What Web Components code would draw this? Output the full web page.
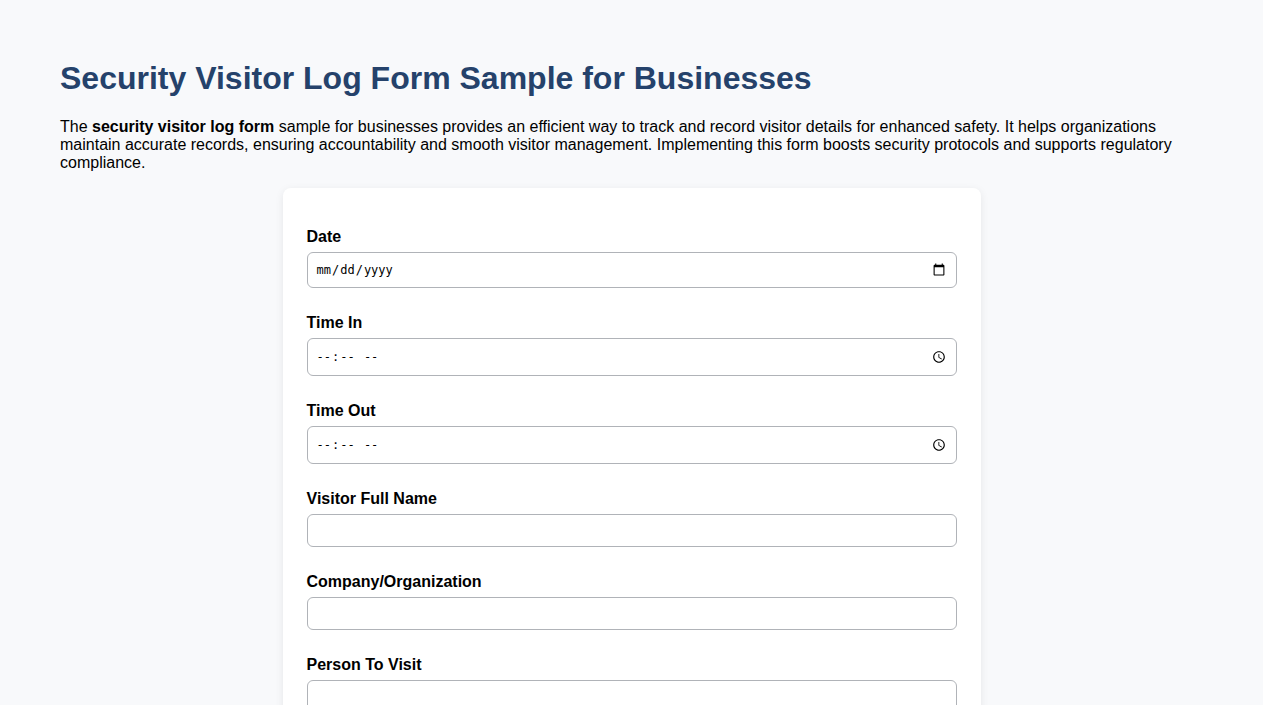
<!DOCTYPE html>
<html lang="en">
<head>
<meta charset="utf-8">
<meta name="viewport" content="width=device-width, initial-scale=1">
<title>Security Visitor Log Form Sample for Businesses</title>
<style>
  html { scrollbar-width: none; }
  body { margin: 0; background: #f8f9fb; color: #000; font: 16px/18px "Liberation Sans", Arial, sans-serif; }
</style>
</head>
<body>
<visitor-page>
  <span slot="title">Security Visitor Log Form Sample for Businesses</span>
  <span slot="intro">The <b>security visitor log form</b> sample for businesses provides an efficient way to track and record visitor details for enhanced safety. It helps organizations maintain accurate records, ensuring accountability and smooth visitor management. Implementing this form boosts security protocols and supports regulatory compliance.</span>
  <visitor-form>
    <form-field type="date" name="date" label="Date"></form-field>
    <form-field type="time" name="time-in" label="Time In"></form-field>
    <form-field type="time" name="time-out" label="Time Out"></form-field>
    <form-field type="text" name="visitor" label="Visitor Full Name"></form-field>
    <form-field type="text" name="company" label="Company/Organization"></form-field>
    <form-field type="text" name="host" label="Person To Visit"></form-field>
  </visitor-form>
</visitor-page>
<script>
class VisitorPage extends HTMLElement {
  constructor() {
    super();
    this.attachShadow({ mode: "open" }).innerHTML = `
      <style>
        :host { display: block; padding: 60px; }
        h1 { margin: 0 0 22px; color: #25426b; font-size: 32px; line-height: 36px; }
        p { margin: 0 0 16px; }
      </style>
      <h1><slot name="title"></slot></h1>
      <p><slot name="intro"></slot></p>
      <slot></slot>`;
  }
}
class VisitorForm extends HTMLElement {
  constructor() {
    super();
    this.attachShadow({ mode: "open" }).innerHTML = `
      <style>
        :host { display: block; }
        form { box-sizing: border-box; max-width: 698px; margin: 0 auto; padding: 40px 24px 24px; background: #fff; border-radius: 8px; box-shadow: 0 2px 8px rgba(0,0,0,.08); }
      </style>
      <form><slot></slot></form>`;
  }
}
class FormField extends HTMLElement {
  connectedCallback() {
    const type = this.getAttribute("type");
    const name = this.getAttribute("name");
    this.attachShadow({ mode: "open" }).innerHTML = `
      <style>
        :host { display: block; margin-bottom: 26px; }
        label { display: block; margin-bottom: 6px; font-weight: bold; }
        input { display: block; box-sizing: border-box; width: 100%; height: 33px; margin: 0; padding: 8px; border: 1px solid #b0b3b8; border-radius: 6px; background: #fff; color: #000; font: 13px/15px "Liberation Sans", Arial, sans-serif; }
        input[type="date"], input[type="time"] { font-family: "DejaVu Sans Mono", monospace; font-size: 12px; }
        input[type="date"] { height: 36px; }
        input[type="time"] { height: 38px; }
        input[type="date"]::-webkit-calendar-picker-indicator { width: 14px; height: 14px; padding: 2px; }
        input[type="time"]::-webkit-calendar-picker-indicator { width: 14px; height: 14px; padding: 2px; }
      </style>
      <label for="${name}">${this.getAttribute("label")}</label>
      <input id="${name}" name="${name}" type="${type}">`;
  }
}
customElements.define("visitor-page", VisitorPage);
customElements.define("visitor-form", VisitorForm);
customElements.define("form-field", FormField);
</script>
</body>
</html>
